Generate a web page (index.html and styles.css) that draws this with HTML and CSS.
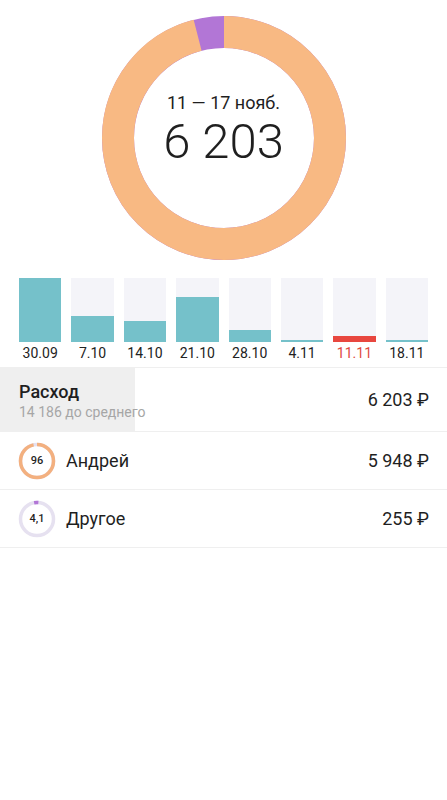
FILE: index.html
```html
<!DOCTYPE html>
<html lang="ru">
<head>
    <meta charset="UTF-8">
    <meta name="viewport" content="width=device-width, initial-scale=1.0">
    <title>Расход</title>
    <link rel="stylesheet" href="styles.css">
</head>
<body>
    <div class="screen">
        <div class="donut">
            <svg class="donut-ring" width="244" height="244" viewBox="0 0 244 244">
                <circle cx="122" cy="122" r="106" fill="none" stroke="#b276d6" stroke-width="32"/>
                <circle cx="122" cy="122" r="106" fill="none" stroke="#f8b983" stroke-width="32"
                        stroke-dasharray="638.7 666" transform="rotate(-90 122 122)"/>
            </svg>
            <div class="donut-text">
                <div class="donut-period">11 — 17 нояб.</div>
                <div class="donut-total">6 203</div>
            </div>
        </div>

        <div class="bars">
            <div class="bar">
                <div class="bar-track"><div class="bar-fill" style="height: 64px"></div></div>
                <div class="bar-label">30.09</div>
            </div>
            <div class="bar">
                <div class="bar-track"><div class="bar-fill" style="height: 26px"></div></div>
                <div class="bar-label">7.10</div>
            </div>
            <div class="bar">
                <div class="bar-track"><div class="bar-fill" style="height: 21px"></div></div>
                <div class="bar-label">14.10</div>
            </div>
            <div class="bar">
                <div class="bar-track"><div class="bar-fill" style="height: 45px"></div></div>
                <div class="bar-label">21.10</div>
            </div>
            <div class="bar">
                <div class="bar-track"><div class="bar-fill" style="height: 12px"></div></div>
                <div class="bar-label">28.10</div>
            </div>
            <div class="bar">
                <div class="bar-track"><div class="bar-fill" style="height: 2px"></div></div>
                <div class="bar-label">4.11</div>
            </div>
            <div class="bar current">
                <div class="bar-track"><div class="bar-fill" style="height: 6px"></div></div>
                <div class="bar-label">11.11</div>
            </div>
            <div class="bar">
                <div class="bar-track"><div class="bar-fill" style="height: 2px"></div></div>
                <div class="bar-label">18.11</div>
            </div>
        </div>

        <div class="row summary">
            <div class="summary-label">
                <div class="summary-title">Расход</div>
                <div class="summary-sub">14 186 до среднего</div>
            </div>
            <div class="amount">6 203 ₽</div>
        </div>

        <div class="row item">
            <div class="badge">
                <svg width="38" height="38" viewBox="0 0 38 38">
                    <circle cx="19" cy="19" r="16.5" fill="none" stroke="#e6e1f0" stroke-width="3.5"/>
                    <circle cx="19" cy="19" r="16.5" fill="none" stroke="#f3b07f" stroke-width="3.5"
                            stroke-dasharray="99.5 104" transform="rotate(-90 19 19)"/>
                </svg>
                <span class="badge-text">96</span>
            </div>
            <div class="name">Андрей</div>
            <div class="amount">5 948 ₽</div>
        </div>

        <div class="row item">
            <div class="badge">
                <svg width="38" height="38" viewBox="0 0 38 38">
                    <circle cx="19" cy="19" r="16.5" fill="none" stroke="#e6e1f0" stroke-width="3.5"/>
                    <circle cx="19" cy="19" r="16.5" fill="none" stroke="#b276d6" stroke-width="3.5"
                            stroke-dasharray="4.3 104" transform="rotate(-100 19 19)"/>
                </svg>
                <span class="badge-text">4,1</span>
            </div>
            <div class="name">Другое</div>
            <div class="amount">255 ₽</div>
        </div>
    </div>
</body>
</html>
```

FILE: styles.css
```css
body {
    margin: 0;
    background: #fff;
    font-family: Roboto, "Noto Sans", sans-serif;
    color: #1f1f1f;
}
.screen {
    width: 447px;
}
.donut {
    position: relative;
    width: 244px;
    height: 244px;
    margin: 16px auto 0;
}
.donut-ring {
    display: block;
}
.donut-text {
    position: absolute;
    inset: 0;
    display: flex;
    flex-direction: column;
    align-items: center;
    justify-content: center;
    padding-bottom: 14px;
    box-sizing: border-box;
}
.donut-period {
    font-size: 18px;
    line-height: 22px;
}
.donut-total {
    font-size: 49px;
    font-weight: 300;
    line-height: 56px;
    margin-top: 0;
}
.bars {
    display: flex;
    gap: 10px;
    padding: 0 19px;
    margin-top: 18px;
}
.bar {
    flex: 1;
}
.bar-track {
    height: 64px;
    background: #f4f4f9;
    display: flex;
    align-items: flex-end;
}
.bar-fill {
    width: 100%;
    background: #75c1ca;
}
.bar-label {
    text-align: center;
    font-size: 14px;
    line-height: 20px;
    margin-top: 1px;
    color: #222;
}
.current .bar-fill {
    background: #e8473f;
}
.current .bar-label {
    color: #e0493f;
}
.row {
    display: flex;
    align-items: center;
    border-top: 1px solid #efefef;
    padding-right: 18px;
}
.summary {
    margin-top: 4px;
    height: 63px;
}
.summary-label {
    width: 135px;
    height: 100%;
    box-sizing: border-box;
    padding-left: 19px;
    padding-top: 2px;
    background: #efefef;
    white-space: nowrap;
    display: flex;
    flex-direction: column;
    justify-content: center;
}
.summary-title {
    font-size: 18px;
    font-weight: 500;
    line-height: 22px;
}
.summary-sub {
    font-size: 14px;
    line-height: 18px;
    color: #a6a6a6;
}
.amount {
    margin-left: auto;
    font-size: 18px;
}
.item {
    height: 57px;
    padding-left: 18px;
}
.item:last-child {
    border-bottom: 1px solid #efefef;
}
.badge {
    position: relative;
    width: 38px;
    height: 38px;
}
.badge svg {
    display: block;
}
.badge-text {
    position: absolute;
    inset: 0;
    display: flex;
    align-items: center;
    justify-content: center;
    font-size: 11px;
    font-weight: 500;
}
.name {
    margin-left: 10px;
    font-size: 18px;
}
```
